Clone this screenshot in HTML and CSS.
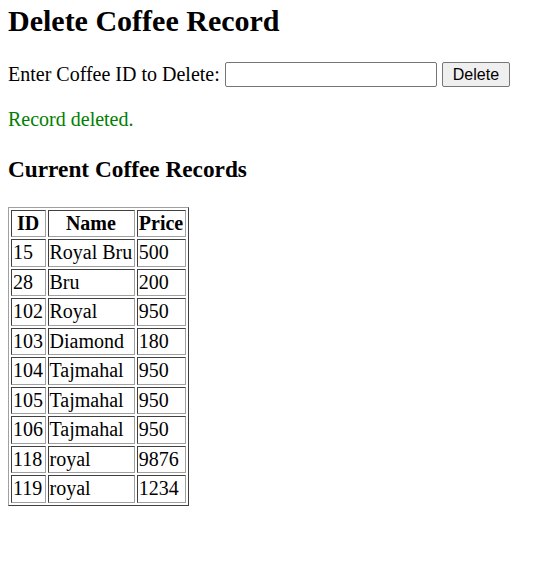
FILE: index.html
```html
<!DOCTYPE html>
<html>
<head>
<meta charset="utf-8">
<title>Delete Coffee Record</title>
<link rel="stylesheet" href="styles.css">
</head>
<body>
<h1 class="title">Delete Coffee Record</h1>
<form class="del-form">
  <label class="lbl" for="cid">Enter Coffee ID to Delete:</label>
  <input class="field" type="text" id="cid" name="cid">
  <button class="btn" type="submit">Delete</button>
</form>
<p class="msg">Record deleted.</p>
<h2 class="sub">Current Coffee Records</h2>
<table class="rec">
  <tr><th>ID</th><th>Name</th><th>Price</th></tr>
  <tr><td>15</td><td>Royal Bru</td><td>500</td></tr>
  <tr><td>28</td><td>Bru</td><td>200</td></tr>
  <tr><td>102</td><td>Royal</td><td>950</td></tr>
  <tr><td>103</td><td>Diamond</td><td>180</td></tr>
  <tr><td>104</td><td>Tajmahal</td><td>950</td></tr>
  <tr><td>105</td><td>Tajmahal</td><td>950</td></tr>
  <tr><td>106</td><td>Tajmahal</td><td>950</td></tr>
  <tr><td>118</td><td>royal</td><td>9876</td></tr>
  <tr><td>119</td><td>royal</td><td>1234</td></tr>
</table>
</body>
</html>
```
FILE: styles.css
```css
html, body { background: #fff; }
body {
  margin: 0 8px;
  font-family: "Liberation Serif", "Times New Roman", serif;
  font-size: 20px;
  color: #000;
}
.title {
  font-size: 30px;
  font-weight: bold;
  margin: 0 0 24px;
  padding-top: 4px;
}
.del-form {
  display: flex;
  align-items: center;
  gap: 5px;
  margin: 0;
}
.lbl { font-size: 20px; }
.field {
  width: 212px;
  height: 25px;
  box-sizing: border-box;
  border: 1px solid #767676;
  border-radius: 2px;
  padding: 1px 2px;
  font-size: 16px;
  margin: 0;
}
.btn {
  height: 25px;
  box-sizing: border-box;
  font-family: "Liberation Sans", Arial, sans-serif;
  font-size: 16px;
  padding: 1px 10px;
  background: #efefef;
  border: 1px solid #767676;
  border-radius: 2px;
  color: #000;
  margin: 0;
}
.msg {
  color: green;
  margin: 21px 0 0;
}
.sub {
  font-size: 23.3px;
  font-weight: bold;
  margin: 24.5px 0 0;
}
.rec {
  margin-top: 24px;
  border: 1px solid;
  border-color: #a0a0a0 #404040 #404040 #a0a0a0;
  border-collapse: separate;
  border-spacing: 2px;
}
.rec th, .rec td {
  border: 1px solid;
  border-color: #404040 #a0a0a0 #a0a0a0 #404040;
  padding: 1px 1.5px 1px 1px;
  line-height: 23.5px;
}
.rec th { font-weight: bold; text-align: center; }
.rec td { text-align: left; }
```
